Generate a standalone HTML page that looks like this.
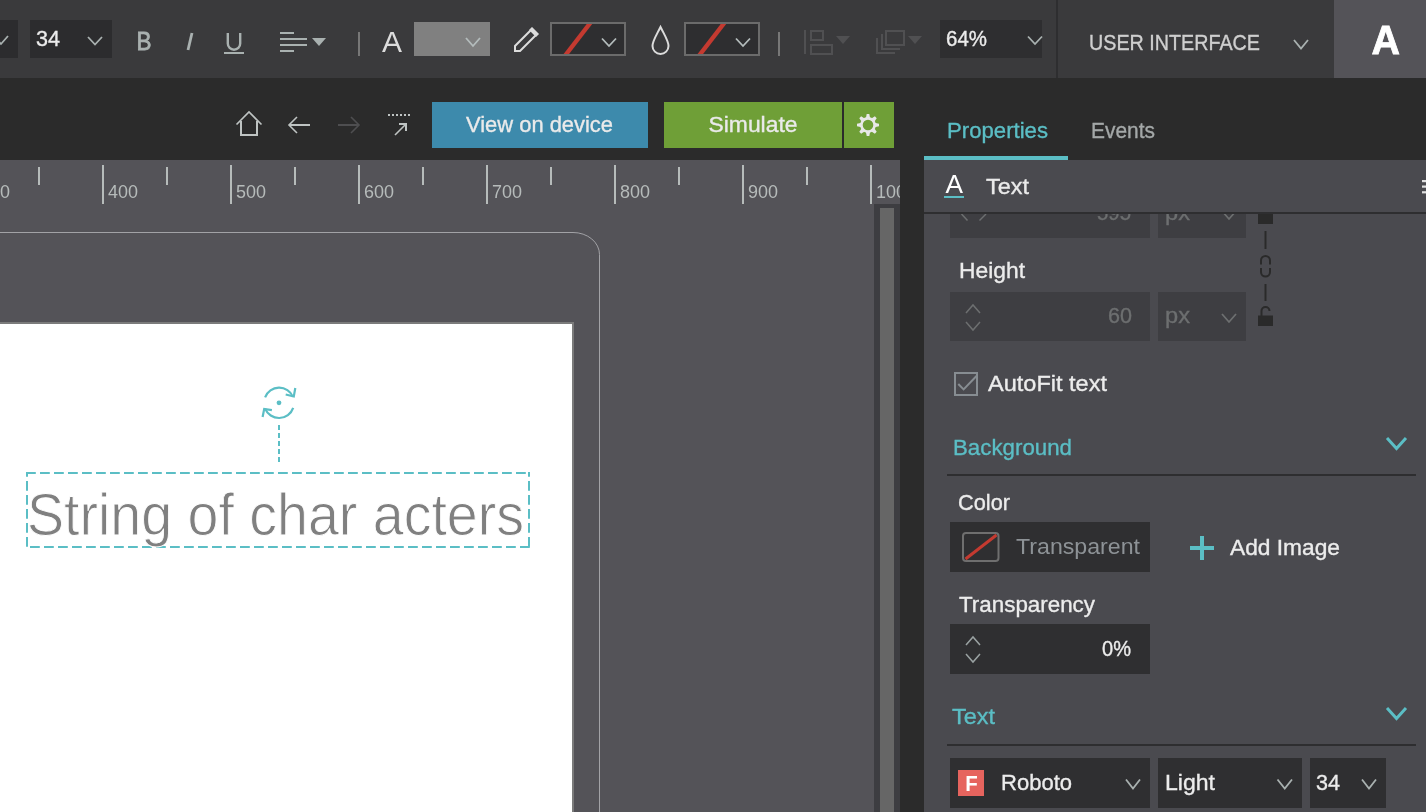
<!DOCTYPE html>
<html><head><meta charset="utf-8"><style>
html,body{margin:0;padding:0;width:1426px;height:812px;overflow:hidden;background:#2b2b2b;}
svg{display:block;will-change:transform;font-family:"Liberation Sans",sans-serif;}
</style></head><body>
<svg width="1426" height="812" viewBox="0 0 1426 812">
<defs><clipPath id="cv"><rect x="0" y="160" width="900" height="652"/></clipPath></defs>
<rect x="0" y="0" width="1426" height="78" fill="#3a3a3c"/>
<rect x="0" y="20" width="18" height="38" fill="#2c2c2e"/>
<polyline points="-6,36 1.0,44 8,36" fill="none" stroke="#a9b1b0" stroke-width="1.8"/>
<rect x="30" y="20" width="82" height="38" fill="#2c2c2e"/>
<text x="36" y="46" font-size="22.6" fill="#ececec" textLength="24" lengthAdjust="spacingAndGlyphs" stroke="#ececec" stroke-width="0.35">34</text>
<polyline points="88,37 95.0,44.5 102,37" fill="none" stroke="#a9b1b0" stroke-width="1.8"/>
<text x="136.5" y="50" font-size="25" fill="#a9b1b0" textLength="15" lengthAdjust="spacingAndGlyphs" stroke="#a9b1b0" stroke-width="0.8">B</text>
<line x1="192" y1="33" x2="188" y2="50" stroke="#a9b1b0" stroke-width="2.8"/>
<path d="M227.8,33 V43.5 A6.2,6.2 0 0 0 240.2,43.5 V33" fill="none" stroke="#a9b1b0" stroke-width="2.4"/>
<rect x="224" y="52" width="20" height="2" fill="#a9b1b0"/>
<rect x="280" y="32" width="14" height="2" fill="#a9b1b0"/>
<rect x="280" y="38" width="27" height="2" fill="#a9b1b0"/>
<rect x="280" y="44" width="27" height="2" fill="#a9b1b0"/>
<rect x="280" y="50" width="14" height="2" fill="#a9b1b0"/>
<polygon points="312,38 326,38 319,46" fill="#a9b1b0"/>
<rect x="358" y="32" width="2" height="24" fill="#777"/>
<text x="382" y="52" font-size="29" fill="#dcdcdc" textLength="20" lengthAdjust="spacingAndGlyphs">A</text>
<rect x="414" y="22" width="76" height="34" fill="#808080"/>
<polyline points="466,38 473.0,46 480,38" fill="none" stroke="#b4bcbc" stroke-width="1.8"/>
<path d="M515,51 L515,46 L532,29 L537,34 L520,51 Z" fill="none" stroke="#dcdcdc" stroke-width="2"/>
<path d="M532,27 L539,34 L536,37 L529,30 Z" fill="#dcdcdc"/>
<rect x="551" y="23" width="74" height="32" fill="#2e2e30" stroke="#6b6b6b" stroke-width="2"/>
<polygon points="563.6,54 569.1,54 592.2,24 586.7,24" fill="#c43a30"/>
<polyline points="602,38.5 609.0,46 616,38.5" fill="none" stroke="#b4bcbc" stroke-width="1.8"/>
<rect x="685" y="23" width="74" height="32" fill="#2e2e30" stroke="#6b6b6b" stroke-width="2"/>
<polygon points="697.6,54 703.1,54 726.2,24 720.7,24" fill="#c43a30"/>
<polyline points="736,38.5 743.0,46 750,38.5" fill="none" stroke="#b4bcbc" stroke-width="1.8"/>
<path d="M660.5,27 C656,36 652.5,41 652.5,46 A8,8 0 0 0 668.5,46 C668.5,41 665,36 660.5,27 Z" fill="none" stroke="#dcdcdc" stroke-width="2"/>
<rect x="778" y="32" width="2" height="24" fill="#777"/>
<rect x="804" y="30" width="2" height="24" fill="#505052"/>
<rect x="811" y="31" width="12" height="9" fill="none" stroke="#505052" stroke-width="2"/>
<rect x="811" y="45" width="21" height="9" fill="none" stroke="#505052" stroke-width="2"/>
<polygon points="836,36 850,36 843,44" fill="#505052"/>
<rect x="886" y="31" width="18" height="14" fill="none" stroke="#505052" stroke-width="2"/>
<polyline points="882,34 882,49 900,49" fill="none" stroke="#505052" stroke-width="2"/>
<polyline points="877,38 877,53 895,53" fill="none" stroke="#505052" stroke-width="2"/>
<polygon points="908,36 922,36 915,44" fill="#505052"/>
<rect x="940" y="20" width="102" height="38" fill="#2e2e30"/>
<text x="946" y="46" font-size="22.6" fill="#ececec" textLength="41" lengthAdjust="spacingAndGlyphs" stroke="#ececec" stroke-width="0.35">64%</text>
<polyline points="1028,36.5 1035.0,44 1042,36.5" fill="none" stroke="#a9b1b0" stroke-width="1.8"/>
<rect x="1056" y="0" width="2" height="78" fill="#2e2e30"/>
<text x="1089" y="50" font-size="22.6" fill="#cfcfcf" textLength="171" lengthAdjust="spacingAndGlyphs" stroke="#cfcfcf" stroke-width="0.35">USER INTERFACE</text>
<polyline points="1294,40 1301.0,48.5 1308,40" fill="none" stroke="#a9b1b0" stroke-width="1.8"/>
<rect x="1334" y="0" width="92" height="78" fill="#545358"/>
<text x="1371.5" y="54" font-size="40" fill="#ffffff" textLength="28.5" lengthAdjust="spacingAndGlyphs" font-weight="bold" stroke="#ffffff" stroke-width="0.8">A</text>
<rect x="0" y="78" width="1426" height="82" fill="#2b2b2b"/>
<polyline points="236.5,124.5 249,112 261.5,124.5" fill="none" stroke="#bfc4c3" stroke-width="1.6"/>
<polyline points="241,121 241,135 257,135 257,121" fill="none" stroke="#bfc4c3" stroke-width="2"/>
<line x1="289" y1="125" x2="310" y2="125" stroke="#bfc4c3" stroke-width="2"/>
<polyline points="297,117 289,125 297,133" fill="none" stroke="#bfc4c3" stroke-width="1.6"/>
<line x1="338" y1="125" x2="359" y2="125" stroke="#4e4e50" stroke-width="2"/>
<polyline points="351,117 359,125 351,133" fill="none" stroke="#4e4e50" stroke-width="1.6"/>
<line x1="388" y1="115" x2="410" y2="115" stroke="#bfc4c3" stroke-width="2" stroke-dasharray="2 2"/>
<line x1="395" y1="135" x2="405" y2="125" stroke="#bfc4c3" stroke-width="1.6"/>
<polyline points="399,124 406,124 406,131" fill="none" stroke="#bfc4c3" stroke-width="2"/>
<rect x="432" y="102" width="216" height="46" fill="#3d8aac"/>
<text x="466" y="132" font-size="22.6" fill="#eaeaea" textLength="147" lengthAdjust="spacingAndGlyphs" stroke="#eaeaea" stroke-width="0.35">View on device</text>
<rect x="664" y="102" width="178" height="46" fill="#6f9f37"/>
<text x="708.5" y="132" font-size="22.6" fill="#eaeaea" textLength="89" lengthAdjust="spacingAndGlyphs" stroke="#eaeaea" stroke-width="0.35">Simulate</text>
<rect x="844" y="102" width="50" height="46" fill="#6f9f37"/>
<circle cx="868" cy="125" r="6.6" fill="none" stroke="#e8e8e8" stroke-width="2.6"/>
<polygon points="865.8,118.5 870.2,118.5 869.3,114 866.7,114" fill="#e8e8e8" transform="rotate(0 868 125)"/>
<polygon points="865.8,118.5 870.2,118.5 869.3,114 866.7,114" fill="#e8e8e8" transform="rotate(45 868 125)"/>
<polygon points="865.8,118.5 870.2,118.5 869.3,114 866.7,114" fill="#e8e8e8" transform="rotate(90 868 125)"/>
<polygon points="865.8,118.5 870.2,118.5 869.3,114 866.7,114" fill="#e8e8e8" transform="rotate(135 868 125)"/>
<polygon points="865.8,118.5 870.2,118.5 869.3,114 866.7,114" fill="#e8e8e8" transform="rotate(180 868 125)"/>
<polygon points="865.8,118.5 870.2,118.5 869.3,114 866.7,114" fill="#e8e8e8" transform="rotate(225 868 125)"/>
<polygon points="865.8,118.5 870.2,118.5 869.3,114 866.7,114" fill="#e8e8e8" transform="rotate(270 868 125)"/>
<polygon points="865.8,118.5 870.2,118.5 869.3,114 866.7,114" fill="#e8e8e8" transform="rotate(315 868 125)"/>
<rect x="0" y="160" width="900" height="652" fill="#545358"/>
<rect x="-26" y="165" width="2" height="39" fill="#b6bbba"/>
<text x="-20" y="198" font-size="19" fill="#b6bbba" textLength="30" lengthAdjust="spacingAndGlyphs" clip-path="url(#cv)">300</text>
<rect x="102" y="165" width="2" height="39" fill="#b6bbba"/>
<text x="108" y="198" font-size="19" fill="#b6bbba" textLength="30" lengthAdjust="spacingAndGlyphs" clip-path="url(#cv)">400</text>
<rect x="230" y="165" width="2" height="39" fill="#b6bbba"/>
<text x="236" y="198" font-size="19" fill="#b6bbba" textLength="30" lengthAdjust="spacingAndGlyphs" clip-path="url(#cv)">500</text>
<rect x="358" y="165" width="2" height="39" fill="#b6bbba"/>
<text x="364" y="198" font-size="19" fill="#b6bbba" textLength="30" lengthAdjust="spacingAndGlyphs" clip-path="url(#cv)">600</text>
<rect x="486" y="165" width="2" height="39" fill="#b6bbba"/>
<text x="492" y="198" font-size="19" fill="#b6bbba" textLength="30" lengthAdjust="spacingAndGlyphs" clip-path="url(#cv)">700</text>
<rect x="614" y="165" width="2" height="39" fill="#b6bbba"/>
<text x="620" y="198" font-size="19" fill="#b6bbba" textLength="30" lengthAdjust="spacingAndGlyphs" clip-path="url(#cv)">800</text>
<rect x="742" y="165" width="2" height="39" fill="#b6bbba"/>
<text x="748" y="198" font-size="19" fill="#b6bbba" textLength="30" lengthAdjust="spacingAndGlyphs" clip-path="url(#cv)">900</text>
<rect x="870" y="165" width="2" height="39" fill="#b6bbba"/>
<text x="876" y="198" font-size="19" fill="#b6bbba" textLength="40" lengthAdjust="spacingAndGlyphs" clip-path="url(#cv)">1000</text>
<rect x="38" y="167" width="2" height="18" fill="#b6bbba"/>
<rect x="166" y="167" width="2" height="18" fill="#b6bbba"/>
<rect x="294" y="167" width="2" height="18" fill="#b6bbba"/>
<rect x="422" y="167" width="2" height="18" fill="#b6bbba"/>
<rect x="550" y="167" width="2" height="18" fill="#b6bbba"/>
<rect x="678" y="167" width="2" height="18" fill="#b6bbba"/>
<rect x="806" y="167" width="2" height="18" fill="#b6bbba"/>
<path d="M-10,232.5 H573 A26.5,22 0 0 1 599.5,254.5 V820" fill="none" stroke="#a2a2a6" stroke-width="1"/>
<rect x="-10" y="323" width="583" height="500" fill="#ffffff" stroke="#7b7b7b" stroke-width="2"/>
<rect x="874" y="204" width="26" height="608" fill="#3d3d41"/>
<rect x="880" y="208" width="14" height="604" fill="#666666"/>
<line x1="26" y1="473" x2="530" y2="473" stroke="#5bbec5" stroke-width="2" stroke-dasharray="9.8 4.2"/>
<line x1="26" y1="547" x2="530" y2="547" stroke="#5bbec5" stroke-width="2" stroke-dasharray="9.8 4.2" stroke-dashoffset="-4"/>
<line x1="27" y1="472" x2="27" y2="548" stroke="#5bbec5" stroke-width="2" stroke-dasharray="9.8 4.2" stroke-dashoffset="5"/>
<line x1="529" y1="472" x2="529" y2="548" stroke="#5bbec5" stroke-width="2" stroke-dasharray="9.8 4.2" stroke-dashoffset="5"/>
<text x="27" y="534.8" font-size="59.5" fill="#808080" textLength="497" lengthAdjust="spacingAndGlyphs">String of char acters</text>
<text x="27" y="534.8" font-size="59.5" fill="none" textLength="497" lengthAdjust="spacingAndGlyphs" stroke="#ffffff" stroke-width="0.9">String of char acters</text>
<line x1="279" y1="425" x2="279" y2="463" stroke="#5bbec5" stroke-width="2" stroke-dasharray="5 3"/>
<path d="M265.1,397.4 A15,15 0 0 1 293,396.9" fill="none" stroke="#5bbec5" stroke-width="2.2"/>
<path d="M293.2,407.9 A15,15 0 0 1 265.1,408.6" fill="none" stroke="#5bbec5" stroke-width="2.2"/>
<polyline points="295.3,388 293.8,396.5 285.7,394.5" fill="none" stroke="#5bbec5" stroke-width="2.2"/>
<polyline points="271.9,410.2 264.2,409 262.6,417" fill="none" stroke="#5bbec5" stroke-width="2.2"/>
<circle cx="279" cy="402.8" r="2.4" fill="#5bbec5"/>
<text x="947" y="138" font-size="22.6" fill="#5bbec5" textLength="101" lengthAdjust="spacingAndGlyphs" stroke="#5bbec5" stroke-width="0.35">Properties</text>
<text x="1091" y="138" font-size="22.6" fill="#a4a8a8" textLength="64" lengthAdjust="spacingAndGlyphs" stroke="#a4a8a8" stroke-width="0.35">Events</text>
<rect x="924" y="156" width="144" height="4" fill="#5bbec5"/>
<rect x="924" y="160" width="502" height="652" fill="#4a4a4f"/>
<rect x="950" y="189" width="200" height="49" fill="#3e3e42"/>
<rect x="1158" y="189" width="88" height="49" fill="#3e3e42"/>
<text x="1097" y="220" font-size="22.6" fill="#6d6f70" textLength="34" lengthAdjust="spacingAndGlyphs" stroke="#6d6f70" stroke-width="0.35">595</text>
<text x="1165" y="220" font-size="22.6" fill="#6d6f70" textLength="25" lengthAdjust="spacingAndGlyphs" stroke="#6d6f70" stroke-width="0.35">px</text>
<polyline points="1222,211 1229.0,219 1236,211" fill="none" stroke="#6d6f70" stroke-width="1.8"/>
<line x1="961.5" y1="214" x2="967.5" y2="220.5" stroke="#6d6f70" stroke-width="1.5"/>
<line x1="979.5" y1="220.5" x2="986" y2="214" stroke="#6d6f70" stroke-width="1.5"/>
<rect x="924" y="160" width="502" height="52" fill="#4a4a4f"/>
<rect x="924" y="212" width="502" height="2" fill="#2e2e30"/>
<text x="945.5" y="193.3" font-size="25" fill="#ffffff" textLength="17.5" lengthAdjust="spacingAndGlyphs">A</text>
<rect x="944" y="196" width="20" height="2" fill="#5bbec5"/>
<text x="986" y="194" font-size="22.6" fill="#eaeaea" textLength="43" lengthAdjust="spacingAndGlyphs" stroke="#eaeaea" stroke-width="0.35">Text</text>
<rect x="1422" y="180" width="4" height="2.2" fill="#e0e0e0"/><rect x="1422" y="185.5" width="4" height="2.2" fill="#e0e0e0"/><rect x="1422" y="191.2" width="4" height="2.2" fill="#e0e0e0"/>
<rect x="1258" y="214" width="15" height="10" fill="#2a2a2a"/>
<rect x="1264.5" y="231" width="2" height="18" fill="#2a2a2a"/>
<path d="M1261,264.5 V260.5 A4.5,4.5 0 0 1 1270,260.5 V264.5 M1261,268 V272 A4.5,4.5 0 0 0 1270,272 V268" fill="none" stroke="#2a2a2a" stroke-width="2"/>
<rect x="1264.5" y="284" width="2" height="17" fill="#2a2a2a"/>
<path d="M1261.5,316 V311 A4,4 0 0 1 1269.5,311" fill="none" stroke="#2a2a2a" stroke-width="2"/>
<rect x="1258" y="315.5" width="15" height="10.5" fill="#2a2a2a"/>
<text x="959" y="278" font-size="22.6" fill="#ececec" textLength="66" lengthAdjust="spacingAndGlyphs" stroke="#ececec" stroke-width="0.35">Height</text>
<rect x="950" y="292" width="200" height="49" fill="#3e3e42"/>
<polyline points="966,313 973,305 980,313" fill="none" stroke="#6d6f70" stroke-width="1.5"/>
<polyline points="966,322 973,330 980,322" fill="none" stroke="#6d6f70" stroke-width="1.5"/>
<text x="1108" y="323" font-size="22.6" fill="#6d6f70" textLength="24" lengthAdjust="spacingAndGlyphs" stroke="#6d6f70" stroke-width="0.35">60</text>
<rect x="1158" y="292" width="88" height="49" fill="#3e3e42"/>
<text x="1165" y="323" font-size="22.6" fill="#6d6f70" textLength="25" lengthAdjust="spacingAndGlyphs" stroke="#6d6f70" stroke-width="0.35">px</text>
<polyline points="1222,314 1229.0,322 1236,314" fill="none" stroke="#6d6f70" stroke-width="1.8"/>
<rect x="955" y="373" width="22" height="22" fill="none" stroke="#878d92" stroke-width="2"/>
<polyline points="958.3,384 963.6,389.4 976.5,376" fill="none" stroke="#878d92" stroke-width="2"/>
<text x="988" y="391.3" font-size="22.6" fill="#ececec" textLength="119" lengthAdjust="spacingAndGlyphs" stroke="#ececec" stroke-width="0.35">AutoFit text</text>
<text x="953" y="454.5" font-size="22.6" fill="#5bbec5" textLength="119" lengthAdjust="spacingAndGlyphs" stroke="#5bbec5" stroke-width="0.35">Background</text>
<polyline points="1387,438 1396.5,448.5 1406,438" fill="none" stroke="#5bbec5" stroke-width="3"/>
<rect x="947" y="474" width="469" height="2" fill="#2e2e30"/>
<text x="958" y="510" font-size="22.6" fill="#ececec" textLength="52" lengthAdjust="spacingAndGlyphs" stroke="#ececec" stroke-width="0.35">Color</text>
<rect x="950" y="522" width="200" height="50" fill="#2f2f31"/>
<rect x="963" y="533" width="35.5" height="28" rx="3" fill="none" stroke="#6f6f6f" stroke-width="2"/>
<line x1="965.5" y1="559" x2="996.5" y2="535" stroke="#c43a30" stroke-width="3"/>
<text x="1016" y="553.5" font-size="22.6" fill="#8d9296" textLength="124" lengthAdjust="spacingAndGlyphs" stroke="none">Transparent</text>
<rect x="1200" y="536" width="4" height="24" fill="#5bbec5"/><rect x="1190" y="546" width="24" height="4" fill="#5bbec5"/>
<text x="1230" y="554.8" font-size="22.6" fill="#ececec" textLength="110" lengthAdjust="spacingAndGlyphs" stroke="#ececec" stroke-width="0.35">Add Image</text>
<text x="959" y="612" font-size="22.6" fill="#ececec" textLength="136" lengthAdjust="spacingAndGlyphs" stroke="#ececec" stroke-width="0.35">Transparency</text>
<rect x="950" y="624" width="200" height="50" fill="#2f2f31"/>
<polyline points="966,645 973,637 980,645" fill="none" stroke="#9aa2a2" stroke-width="1.5"/>
<polyline points="966,654 973,662 980,654" fill="none" stroke="#9aa2a2" stroke-width="1.5"/>
<text x="1102" y="656" font-size="22.6" fill="#ececec" textLength="29" lengthAdjust="spacingAndGlyphs" stroke="#ececec" stroke-width="0.35">0%</text>
<text x="952" y="724" font-size="22.6" fill="#5bbec5" textLength="43" lengthAdjust="spacingAndGlyphs" stroke="#5bbec5" stroke-width="0.35">Text</text>
<polyline points="1387,708 1396.5,718.5 1406,708" fill="none" stroke="#5bbec5" stroke-width="3"/>
<rect x="947" y="744" width="469" height="2" fill="#2e2e30"/>
<rect x="950" y="758" width="200" height="50" fill="#2f2f31"/>
<rect x="958" y="770" width="26" height="26" fill="#e6645e"/>
<text x="965.3" y="791" font-size="21.5" fill="#ffffff" textLength="12.5" lengthAdjust="spacingAndGlyphs" font-weight="bold">F</text>
<text x="1001" y="789.6" font-size="22.6" fill="#ececec" textLength="71" lengthAdjust="spacingAndGlyphs" stroke="#ececec" stroke-width="0.35">Roboto</text>
<polyline points="1126,779.5 1133.0,788.5 1140,779.5" fill="none" stroke="#a9b1b0" stroke-width="1.8"/>
<rect x="1158" y="758" width="144" height="50" fill="#2f2f31"/>
<text x="1165" y="789.6" font-size="22.6" fill="#ececec" textLength="50" lengthAdjust="spacingAndGlyphs" stroke="#ececec" stroke-width="0.35">Light</text>
<polyline points="1277.5,779.5 1284.75,788.5 1292,779.5" fill="none" stroke="#a9b1b0" stroke-width="1.8"/>
<rect x="1310" y="758" width="76" height="50" fill="#2f2f31"/>
<text x="1316" y="789.6" font-size="22.6" fill="#ececec" textLength="24" lengthAdjust="spacingAndGlyphs" stroke="#ececec" stroke-width="0.35">34</text>
<polyline points="1362,779.5 1369.0,788.5 1376,779.5" fill="none" stroke="#a9b1b0" stroke-width="1.8"/>
</svg>
</body></html>
